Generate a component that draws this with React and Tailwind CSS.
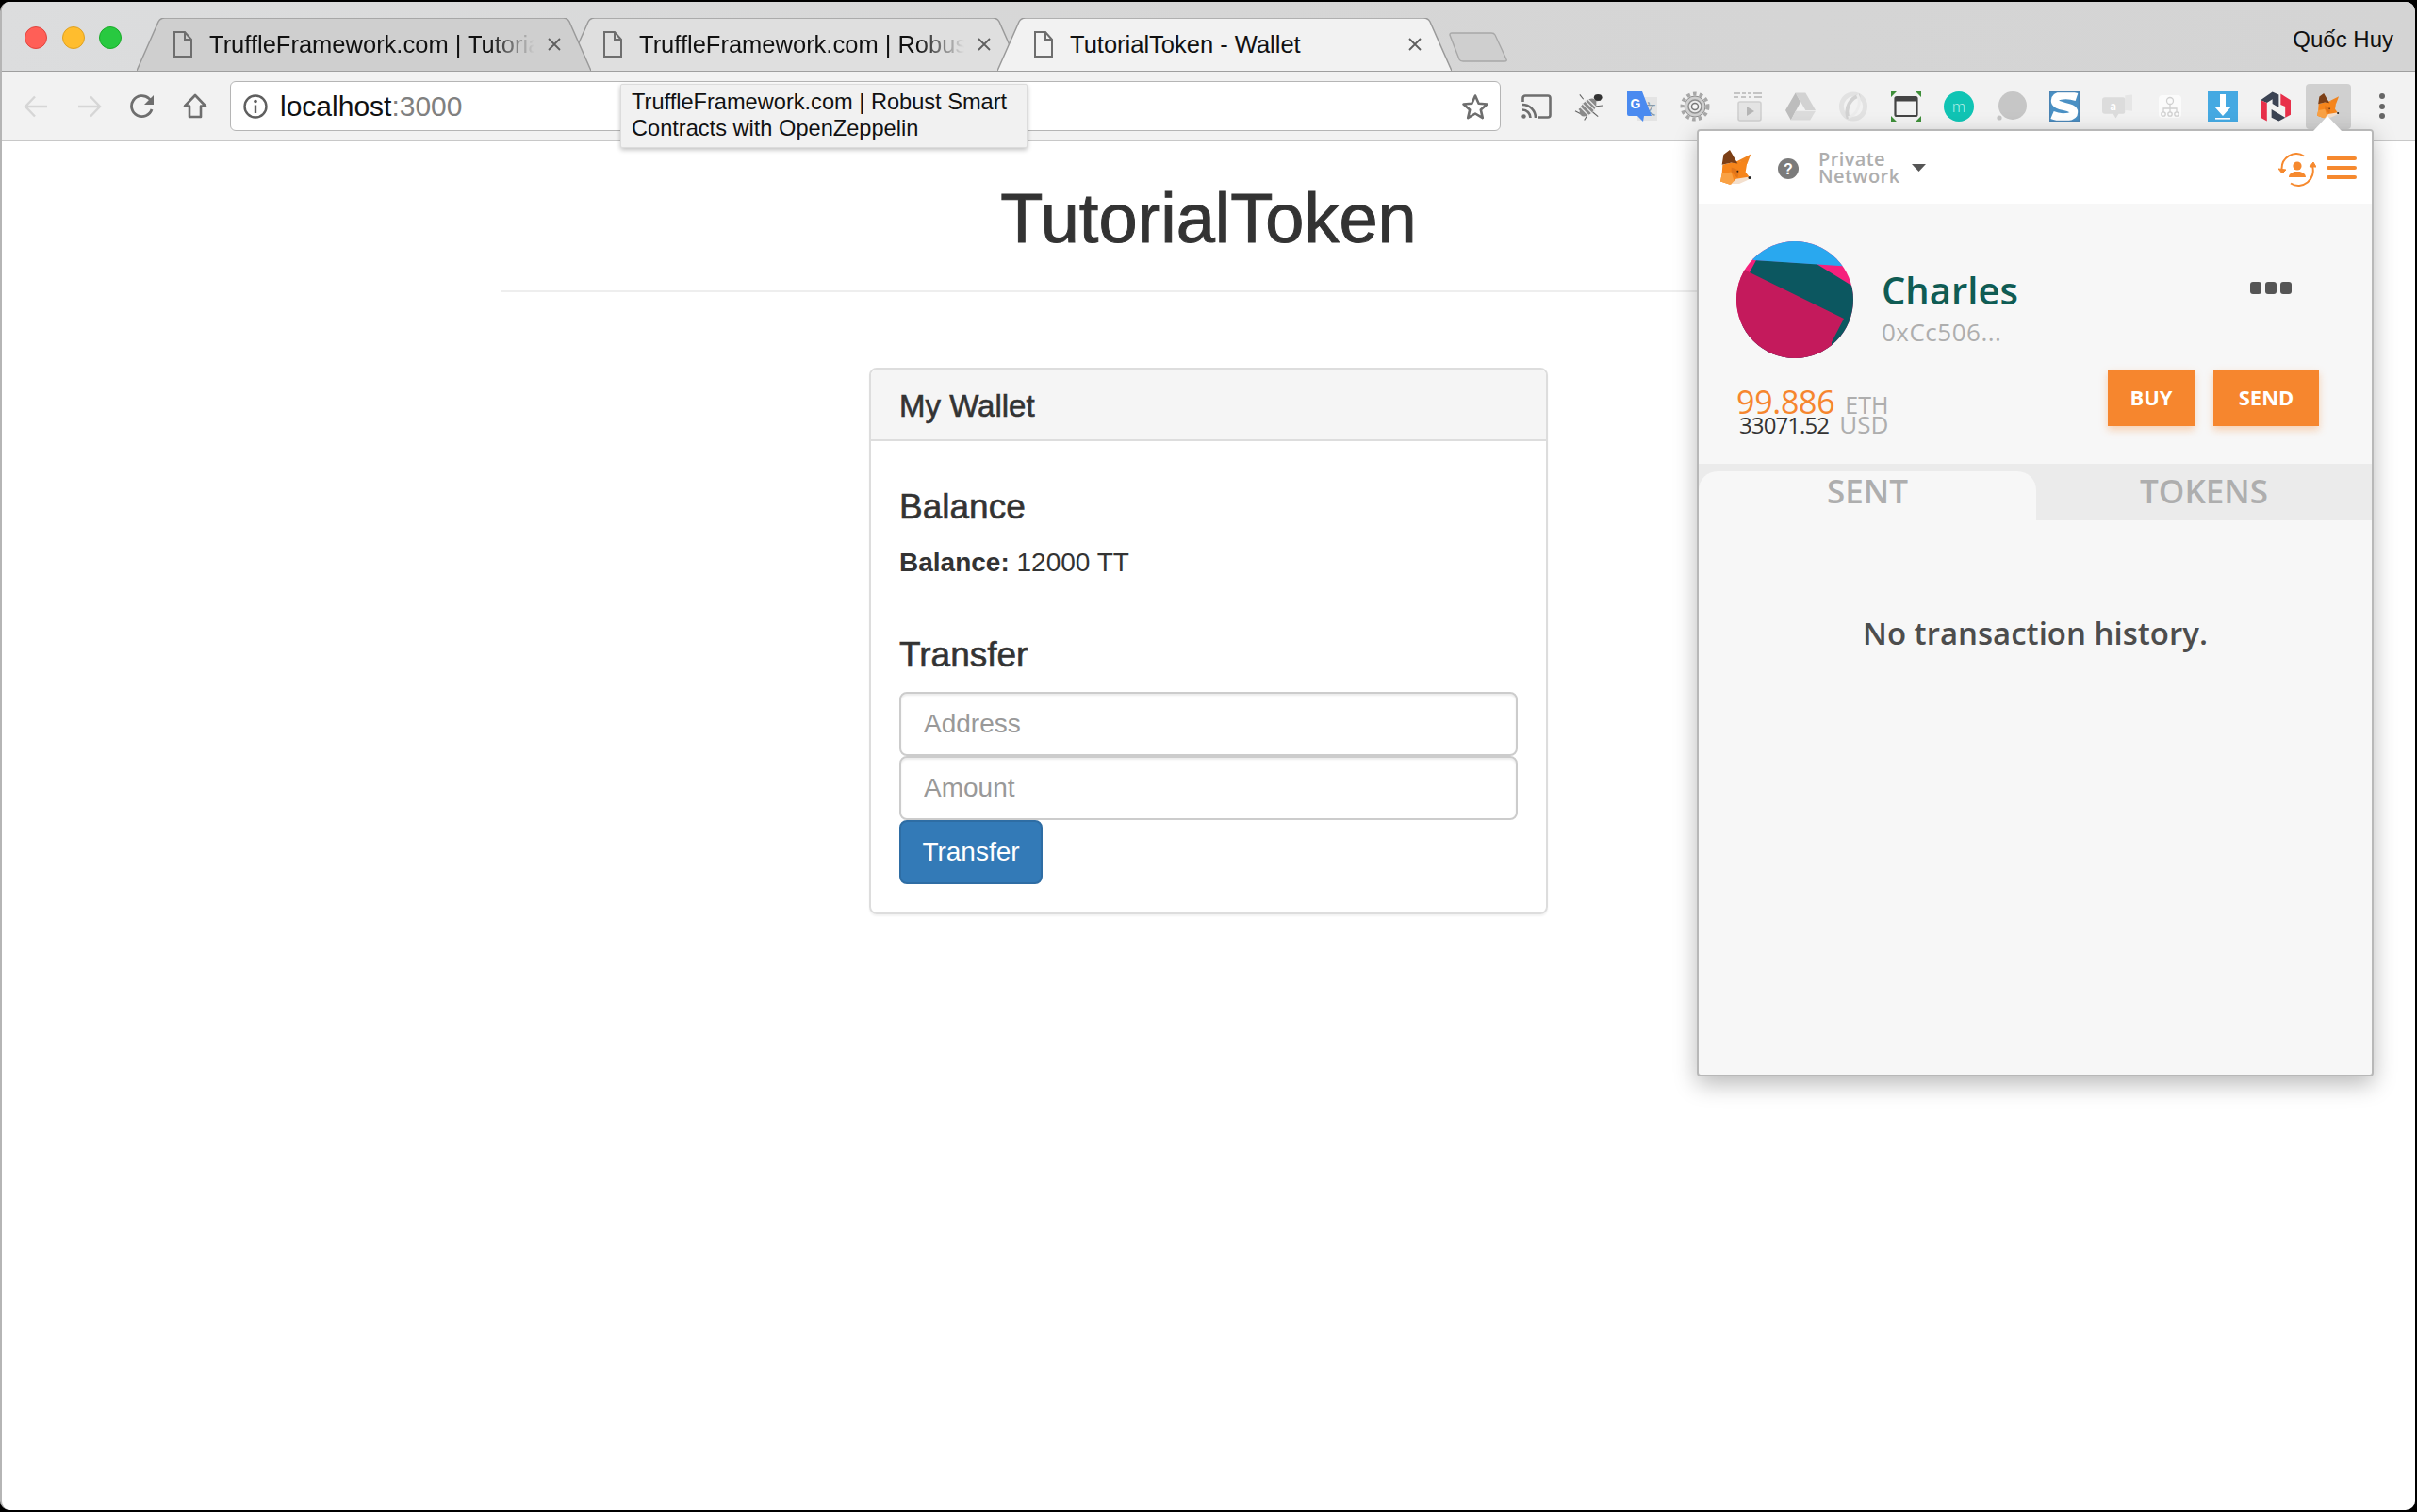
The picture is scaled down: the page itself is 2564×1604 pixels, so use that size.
import React from 'react';

const MONT = "font-['Open_Sans',sans-serif]";

function DocIcon() {
  return (
    <svg width="20" height="28" viewBox="0 0 20 28" fill="none" stroke="#6e6e6e" strokeWidth="2" className="shrink-0">
      <path d="M1 1h11l7 8v18H1z" />
      <path d="M12 1v8h7" />
    </svg>
  );
}

function CloseIcon() {
  return (
    <svg width="14" height="14" viewBox="0 0 14 14" stroke="#5f5f5f" strokeWidth="1.8" className="shrink-0">
      <path d="M1 1l12 12M13 1L1 13" />
    </svg>
  );
}

function Tab({ title, fill, stroke, fade, className }) {
  return (
    <div className={`relative flex h-[56px] w-[482px] shrink-0 items-center ${className}`}>
      <svg className="absolute inset-0" width="482" height="56" viewBox="0 0 482 56">
        <path d="M0 56 L23 4 Q25 0 30 0 L452 0 Q457 0 459 4 L482 56" fill={fill} stroke={stroke} strokeWidth="1.5" />
      </svg>
      <div className="relative ml-[39px] flex items-center">
        <DocIcon />
        <div className={`ml-[18px] w-[345px] overflow-hidden whitespace-nowrap text-[25.5px] leading-[28px] text-[#111] ${fade ? '[mask-image:linear-gradient(to_right,black_86%,transparent_100%)]' : ''}`}>
          {title}
        </div>
        <div className="ml-[14px]"><CloseIcon /></div>
      </div>
    </div>
  );
}

function Fox({ size = 35 }) {
  return (
    <svg width={size} height={size * 1.05} viewBox="0 0 105 110">
      <polygon points="55,35 97,13 85,45" fill="#f0841f" />
      <polygon points="7,47 35,40 55,35 85,40 80,70 95,90 45,105 30,110 0,100 5,75" fill="#f6851b" />
      <polygon points="5,75 35,70 45,105 30,110 0,100" fill="#f9a144" />
      <polygon points="35,55 60,65 55,90 35,70" fill="#e2761b" />
      <polygon points="10,15 30,0 55,43 35,40 5,47" fill="#7c3f16" />
      <polygon points="50,92 93,85 95,92 60,108 35,108" fill="#f3dfcd" />
      <circle cx="93" cy="88" r="4.5" fill="#222" />
      <circle cx="55" cy="68" r="2.8" fill="#3a2410" />
    </svg>
  );
}

function CastIcon() {
  return (
    <svg width="32" height="26" viewBox="0 0 32 26" fill="none" stroke="#6e6e6e" strokeWidth="2.6">
      <path d="M1.5 8V4a2.5 2.5 0 0 1 2.5-2.5h24A2.5 2.5 0 0 1 30.5 4v18a2.5 2.5 0 0 1-2.5 2.5h-10" />
      <path d="M1 11a14 14 0 0 1 14 14M1 16.5a8.5 8.5 0 0 1 8.5 8.5" />
      <circle cx="2.5" cy="23.5" r="2.2" fill="#6e6e6e" stroke="none" />
    </svg>
  );
}

function BugIcon() {
  return (
    <svg width="33" height="32" viewBox="0 0 33 32" fill="none">
      <g stroke="#666" strokeWidth="1.2">
        <path d="M10 8L6 3M20 10L29 9M22 16L31 15M20 22L26 27M12 20L5 19M9 25L1 21M14 26L11 31" />
      </g>
      <ellipse cx="15" cy="17" rx="7" ry="11.5" transform="rotate(42 15 17)" fill="#8a8a8a" />
      <path d="M8 12L20 24M6 16L16 26M11 9L23 21M15 8L24 17" stroke="#e8e8e8" strokeWidth="1.3" />
      <ellipse cx="26" cy="6" rx="4.5" ry="3.5" fill="#333" />
    </svg>
  );
}

function TranslateIcon() {
  return (
    <svg width="32" height="32" viewBox="0 0 32 32">
      <rect x="11" y="6" width="21" height="25" fill="#e4e4e4" />
      <text x="23" y="24" textAnchor="middle" fontSize="15" fill="#8a9aa8" fontFamily="Noto Sans CJK SC, sans-serif">文</text>
      <path d="M0 0h16l10 26H18l-1 6-6-6H2a2 2 0 0 1-2-2z" fill="#4a8af0" />
      <text x="9" y="18" textAnchor="middle" fontSize="14" fontWeight="700" fill="#fff" fontFamily="Liberation Sans, sans-serif">G</text>
    </svg>
  );
}

function GearIcon() {
  return (
    <svg width="32" height="32" viewBox="0 0 32 32" fill="none">
      <circle cx="16" cy="16" r="13.5" stroke="#a8a8a8" strokeWidth="4" strokeDasharray="3.6 3.2" />
      <circle cx="16" cy="16" r="11" fill="#cfcfcf" stroke="#8f8f8f" />
      <circle cx="16" cy="16" r="7" fill="#ececec" stroke="#8f8f8f" strokeWidth="1.5" />
      <circle cx="16" cy="16" r="3.5" fill="#f6f6f6" stroke="#777" strokeWidth="1.5" />
    </svg>
  );
}

function VideoIcon() {
  return (
    <svg width="32" height="32" viewBox="0 0 32 32" fill="none">
      <path d="M1 2h7M10 2h4M16 2h4M22 2h9M1 6h5M9 6h5M17 6h3M23 6h8" stroke="#c4c4c4" strokeWidth="2.2" />
      <rect x="6" y="11" width="24" height="20" rx="2" fill="#e4e4e4" stroke="#d0d0d0" strokeWidth="1.6" />
      <path d="M15 16l8 5-8 5z" fill="#b5b5b5" />
    </svg>
  );
}

function DriveIcon() {
  return (
    <svg width="33" height="30" viewBox="0 0 33 30">
      <path d="M11 0h11l11 19H22z" fill="#d2d2d2" />
      <path d="M11 0l5.5 10L6 30 0 19z" fill="#bdbdbd" />
      <path d="M11 20h22l-6 10H6z" fill="#dcdcdc" />
    </svg>
  );
}

function SwirlIcon() {
  return (
    <svg width="33" height="32" viewBox="0 0 33 32" fill="none">
      <ellipse cx="16.5" cy="16" rx="13" ry="13.5" stroke="#e2e2e2" strokeWidth="5" />
      <path d="M11 29C7 18 13 6 24 4" stroke="#d2d2d2" strokeWidth="4" />
      <path d="M21 3c5 9 0 22-10 25" stroke="#ececec" strokeWidth="3" />
    </svg>
  );
}

function FrameIcon() {
  return (
    <svg width="32" height="32" viewBox="0 0 32 32">
      <path d="M0 0h6L0 6zM32 0v6l-6-6zM0 32v-6l6 6zM32 32h-6l6-6z" fill="#3f8f3a" />
      <rect x="4.5" y="6" width="23" height="20" rx="1.5" fill="none" stroke="#444" strokeWidth="2.2" />
      <rect x="4.5" y="6" width="23" height="4.5" fill="#444" />
    </svg>
  );
}

function MintIcon() {
  return (
    <svg width="32" height="32" viewBox="0 0 32 32">
      <circle cx="16" cy="16" r="16" fill="#10c4b4" />
      <text x="16" y="22" textAnchor="middle" fontSize="18" fill="#bff0ea" fontFamily="Lato, sans-serif" fontWeight="300">m</text>
    </svg>
  );
}

function GreyDotIcon() {
  return (
    <svg width="32" height="32" viewBox="0 0 32 32">
      <circle cx="17" cy="15" r="15" fill="#c6c6c6" />
      <circle cx="3" cy="28" r="2.6" fill="#c6c6c6" />
    </svg>
  );
}

function SIcon() {
  return (
    <svg width="32" height="32" viewBox="0 0 32 32" fill="none">
      <rect width="32" height="32" fill="#4a90c4" />
      <path d="M29 6C20 3 6 3 6 10c0 7 20 5 20 12 0 6-14 7-23 3" stroke="#fff" strokeWidth="8.5" />
      <rect x="0.6" y="0.6" width="30.8" height="30.8" stroke="#4a84b4" strokeWidth="1.2" />
    </svg>
  );
}

function BubbleIcon() {
  return (
    <svg width="33" height="28" viewBox="0 0 33 28">
      <path d="M25 2l8-1v18l-8-1z" fill="#e6e6e6" />
      <path d="M3 4h20a2 2 0 0 1 2 2v14a2 2 0 0 1-2 2h-5l-3 5-3-5H3a3 3 0 0 1-3-3V7a3 3 0 0 1 3-3z" fill="#dcdcdc" />
      <text x="12" y="18" textAnchor="middle" fontSize="13" fill="#fff" fontFamily="Lato, sans-serif" fontWeight="700">a</text>
    </svg>
  );
}

function OrgIcon() {
  return (
    <svg width="24" height="24" viewBox="0 0 24 24" fill="none" stroke="#d0d0d0" strokeWidth="1.3">
      <rect width="24" height="24" rx="4" fill="#fbfbfb" stroke="none" />
      <circle cx="12" cy="6" r="3.5" />
      <path d="M12 9.5V14M5 18v-4h14v4M12 14v4" />
      <circle cx="5" cy="20" r="2.2" /><circle cx="12" cy="20" r="2.2" /><circle cx="19" cy="20" r="2.2" />
    </svg>
  );
}

function DownloadIcon() {
  return (
    <svg width="32" height="32" viewBox="0 0 32 32">
      <rect width="32" height="32" fill="#45a9e2" />
      <path d="M13 3h6v13h6L16 26 7 16h6z" fill="#fff" />
      <rect x="8" y="28" width="16" height="1.6" fill="#fff" />
    </svg>
  );
}

function NIcon() {
  return (
    <svg width="32" height="32" viewBox="0 0 33 32">
      <polygon points="0,9 13,0 20,3 20,17 13,13 13,8 7,12" fill="#3c4454" />
      <polygon points="0,9 7,12 7,32 0,28" fill="#e8304a" />
      <polygon points="12,19 27,28 33,25 20,32 12,28" fill="#3c4454" />
      <polygon points="22,2 33,9 33,25 27,28 27,16 22,14" fill="#e8304a" />
    </svg>
  );
}

function SyncIcon() {
  return (
    <svg width="40" height="36" viewBox="0 0 40 36" fill="none" stroke="#f6892e" strokeWidth="2">
      <path d="M3.5 18A15.5 16 0 0 1 27 3.5" />
      <path d="M36 14A15.5 16 0 0 1 13 32.5" />
      <path d="M0 17l4 5 4-4z" fill="#f6892e" strokeWidth="1" />
      <path d="M33 15l4-5 3 5z" fill="#f6892e" strokeWidth="1" />
      <circle cx="20" cy="14" r="4.6" fill="#f6892e" stroke="none" />
      <path d="M11 26c0-4 4-5 6-6h6c2 1 6 2 6 6z" fill="#f6892e" stroke="none" />
    </svg>
  );
}

function Avatar() {
  return (
    <svg width="124" height="124" viewBox="0 0 124 124" className="shrink-0 rounded-full">
      <rect width="124" height="124" fill="#f5207c" />
      <polygon points="21,20 85,24 124,48 124,124 0,124 14,33" fill="#0c5760" />
      <polygon points="14,33 114,82 101,107 101,124 0,124 0,24" fill="#c41a5c" />
      <polygon points="0,0 124,0 124,27 18,20" fill="#29a8ef" />
    </svg>
  );
}

const toolbarIcons = [CastIcon, BugIcon, TranslateIcon, GearIcon, VideoIcon, DriveIcon, SwirlIcon, FrameIcon, MintIcon, GreyDotIcon, SIcon, BubbleIcon, OrgIcon, DownloadIcon, NIcon];

export default function App() {
  return (
    <div className="h-[1604px] w-[2564px] overflow-hidden bg-black py-[2px] pr-[2px] font-['Liberation_Sans',sans-serif]">
      <div className="flex h-full flex-col overflow-hidden rounded-[10px] border-l-2 border-[#b5b5b5] bg-white">
        {/* tab strip */}
        <div className="flex h-[73px] shrink-0 items-end bg-gradient-to-r from-[#dcddde] via-[#d6d6d6] to-[#d4d4d4]">
          <div className="mb-[23px] ml-[24px] flex gap-[15.5px] self-end">
            <span className="h-[24px] w-[24px] rounded-full border border-[#e0443e] bg-[#ff5f57]" />
            <span className="h-[24px] w-[24px] rounded-full border border-[#dea123] bg-[#ffbd2e]" />
            <span className="h-[24px] w-[24px] rounded-full border border-[#1aab29] bg-[#28c940]" />
          </div>
          <Tab title="TruffleFramework.com | Tutorial Project" fill="#cfcfcf" stroke="#9a9a9a" fade className="z-10 ml-[16px]" />
          <Tab title="TruffleFramework.com | Robust Smart" fill="#dfdfdf" stroke="#9a9a9a" fade className="z-0 -ml-[26px]" />
          <Tab title="TutorialToken - Wallet" fill="#f2f2f2" stroke="#9a9a9a" className="z-20 -ml-[25px]" />
          <svg width="64" height="32" viewBox="0 0 64 32" className="z-0 mb-[9px] -ml-[4px] shrink-0">
            <path d="M2 3Q2 1 4 1H46Q49 1 50 3L62 29Q63 31 60 31H16Q13 31 12 29Z" fill="#cfcfcf" stroke="#a8a8a8" strokeWidth="1.4" />
          </svg>
          <div className="mb-[19px] ml-auto mr-[23px] self-end whitespace-nowrap text-[24px] leading-[28px] text-[#111]">Quốc Huy</div>
        </div>

        {/* toolbar */}
        <div className="relative z-30 flex h-[75px] shrink-0 items-center border-y border-t-[#9f9f9f] border-b-[#c8c8c8] bg-[#f2f2f2] pl-[23px]">
          <svg width="26" height="24" viewBox="0 0 26 24" fill="none" stroke="#d6d6d6" strokeWidth="2.4"><path d="M25 12H2M12 1.5L2 12l10 10.5" /></svg>
          <svg width="26" height="24" viewBox="0 0 26 24" fill="none" stroke="#d6d6d6" strokeWidth="2.4" className="ml-[31px]"><path d="M1 12h23M14 1.5L24 12 14 22.5" /></svg>
          <svg width="26" height="26" viewBox="0 0 26 26" fill="none" stroke="#6e6e6e" strokeWidth="2.8" className="ml-[30px]"><path d="M23 16a11 11 0 1 1-3-11.5L24 8" /><path d="M25 1v10H15z" fill="#6e6e6e" stroke="none" /></svg>
          <svg width="26" height="27" viewBox="0 0 26 27" fill="none" stroke="#6e6e6e" strokeWidth="2.6" className="ml-[30px]"><path d="M13 2L2 13.5h5V25h12V13.5h5z" strokeLinejoin="round" /></svg>
          <div className="ml-[24px] flex h-[53px] w-[1348px] shrink-0 items-center rounded-[6px] border border-[#b5b5b5] bg-white pl-[13px] pr-[11px]">
            <svg width="26" height="26" viewBox="0 0 26 26" fill="none" stroke="#5f5f5f" strokeWidth="2.4" className="shrink-0">
              <circle cx="13" cy="13" r="11.5" /><path d="M13 11.5V20" /><circle cx="13" cy="7.5" r="1.8" fill="#5f5f5f" stroke="none" />
            </svg>
            <span className="ml-[13px] text-[30px] leading-[36px] text-[#111]">localhost<span className="text-[#808080]">:3000</span></span>
            <svg width="30" height="28" viewBox="0 0 30 28" fill="none" stroke="#6e6e6e" strokeWidth="2.6" className="ml-auto shrink-0"><path d="M15 2.5l3.6 8.2 8.9.8-6.7 5.9 2 8.7L15 21.5l-7.8 4.6 2-8.7-6.7-5.9 8.9-.8z" strokeLinejoin="round" /></svg>
          </div>
          <div className="ml-[22px] flex items-center gap-[24px]">
            {toolbarIcons.map((Icon, i) => (
              <div key={i} className="flex h-[32px] w-[32px] items-center justify-center"><Icon /></div>
            ))}
          </div>
          <div className="ml-[16px] flex h-[48px] w-[48px] items-center justify-center rounded-[4px] bg-[#d0d0d0]"><Fox size={25} /></div>
          <div className="ml-[30px] flex flex-col gap-[4.5px]">
            <span className="h-[6px] w-[6px] rounded-full bg-[#666]" />
            <span className="h-[6px] w-[6px] rounded-full bg-[#666]" />
            <span className="h-[6px] w-[6px] rounded-full bg-[#666]" />
          </div>

          {/* bookmark tooltip */}
          <div className="absolute left-[656px] top-[13px] h-[68px] w-[432px] rounded-[2px] border border-[#dcdcdc] bg-[#f1f1f1] pl-[11px] pt-[4px] text-[23.6px] leading-[28px] text-[#111] shadow-[0_2px_5px_rgba(0,0,0,0.25)]">
            <div className="whitespace-nowrap">TruffleFramework.com | Robust Smart</div>
            <div className="whitespace-nowrap">Contracts with OpenZeppelin</div>
          </div>
        </div>

        {/* page */}
        <div className="relative flex-1">
          <div className="mx-auto w-[1502px]">
            <h1 className="border-b-2 border-[#eee] pb-[37px] pt-[42px] text-center text-[74px] font-medium leading-[79px] text-[#333] [-webkit-text-stroke:1px_#333]">TutorialToken</h1>
            <div className="mx-auto mt-[80px] w-[720px] rounded-[8px] border-2 border-[#ddd] shadow-[0_2px_2px_rgba(0,0,0,0.05)]">
              <div className="flex h-[76px] items-center rounded-t-[6px] border-b-2 border-[#ddd] bg-[#f5f5f5] px-[30px] pt-[4px] text-[33px] font-medium leading-[36px] text-[#333] [-webkit-text-stroke:0.6px_#333]">My Wallet</div>
              <div className="px-[30px] pb-[30px] pt-[50px] text-[#333]">
                <h3 className="text-[37px] font-medium leading-[40px] [-webkit-text-stroke:0.6px_#333]">Balance</h3>
                <p className="mt-[19px] text-[28px] leading-[40px]"><strong className="font-bold">Balance:</strong> 12000 TT</p>
                <h3 className="mt-[58px] text-[37px] font-medium leading-[40px] [-webkit-text-stroke:0.6px_#333]">Transfer</h3>
                <input placeholder="Address" className="mt-[19px] block h-[68px] w-full rounded-[8px] border-2 border-[#ccc] bg-white px-[24px] text-[28px] shadow-[inset_0_2px_2px_rgba(0,0,0,0.075)] placeholder:text-[#999]" />
                <input placeholder="Amount" className="block h-[68px] w-full rounded-[8px] border-2 border-[#ccc] bg-white px-[24px] text-[28px] shadow-[inset_0_2px_2px_rgba(0,0,0,0.075)] placeholder:text-[#999]" />
                <button className="block h-[68px] w-[152px] rounded-[8px] border-2 border-[#2e6da4] bg-[#337ab7] text-[28px] text-white">Transfer</button>
              </div>
            </div>
          </div>

          {/* metamask popup */}
          <div className={`absolute right-[44px] top-[-13px] z-40 flex h-[1005px] w-[718px] flex-col rounded-[4px] border-2 border-[#b8b8b8] bg-[#f7f7f7] shadow-[0_8px_24px_rgba(0,0,0,0.28)] ${MONT}`}>
            <svg width="30" height="16" viewBox="0 0 30 16" className="absolute -top-[16px] left-[652px]"><path d="M0 16L15 0l15 16z" fill="#fff" /></svg>
            <div className="flex h-[77px] shrink-0 items-center rounded-t-[2px] bg-white pl-[23px] pr-[16px]">
              <Fox size={35} />
              <svg width="22" height="22" viewBox="0 0 22 22" className="ml-[26px] mt-[2px] shrink-0"><circle cx="11" cy="11" r="11" fill="#7b7b7b" /><text x="11" y="17" textAnchor="middle" fontSize="16" fontWeight="700" fill="#fff" fontFamily="Liberation Sans, sans-serif">?</text></svg>
              <div className="ml-[21px] w-[86px] text-[20px] font-semibold leading-[18px] tracking-[0.4px] text-[#aeaeae]">
                <div>Private</div>
                <div>Network</div>
              </div>
              <svg width="15" height="8" viewBox="0 0 15 8" className="ml-[13px] shrink-0"><path d="M0 0h15L7.5 8z" fill="#555" /></svg>
              <div className="ml-auto mt-[4px]"><SyncIcon /></div>
              <div className="ml-[11px] flex w-[32px] flex-col gap-[6px]">
                <span className="h-[4px] rounded-full bg-[#f6892e]" />
                <span className="h-[4px] rounded-full bg-[#f6892e]" />
                <span className="h-[4px] rounded-full bg-[#f6892e]" />
              </div>
            </div>

            <div className="flex items-start pl-[40px] pr-[85px] pt-[40px]">
              <Avatar />
              <div className="ml-[30px] pt-[32px]">
                <div className="text-[40px] font-semibold leading-[40px] text-[#0f5c54]">Charles</div>
                <div className="mt-[8px] text-[26px] leading-[32px] tracking-[0.5px] text-[#aeaeae]">0xCc506...</div>
              </div>
              <div className="ml-auto mt-[43px] flex gap-[4px]">
                <span className="h-[13px] w-[12px] rounded-[3px] bg-[#555]" />
                <span className="h-[13px] w-[12px] rounded-[3px] bg-[#555]" />
                <span className="h-[13px] w-[12px] rounded-[3px] bg-[#555]" />
              </div>
            </div>

            <div className="mt-[12px] flex h-[60px] items-start pl-[40px] pr-[56px]">
              <div className="pt-[19px]">
                <div className="flex h-[29px] items-baseline leading-[30px]">
                  <span className="text-[34px] tracking-[-0.3px] text-[#f6862e]">99.886</span>
                  <span className="ml-[11px] text-[25px] text-[#aeaeae]">ETH</span>
                </div>
                <div className="ml-[3px] flex h-[20px] items-baseline leading-[20px]">
                  <span className="text-[24px] tracking-[-0.9px] text-[#333]">33071.52</span>
                  <span className="ml-[11px] text-[26px] text-[#aeaeae]">USD</span>
                </div>
              </div>
              <button className="ml-auto h-[60px] w-[92px] bg-[#f6862e] pb-[2px] text-[22px] font-bold text-white shadow-[0_4px_8px_rgba(246,134,46,0.35)]">BUY</button>
              <button className="ml-[20px] h-[60px] w-[112px] bg-[#f6862e] pb-[2px] text-[22px] font-bold text-white shadow-[0_4px_8px_rgba(246,134,46,0.35)]">SEND</button>
            </div>

            <div className="mt-[40px] flex h-[60px] shrink-0 bg-[#ebebeb] text-[35px] font-semibold text-[#aeaeae]">
              <div className="mt-[8px] flex h-[52px] w-[358px] items-center justify-center rounded-t-[20px] bg-[#f7f7f7] pb-[10px]">SENT</div>
              <div className="flex flex-1 items-center justify-center pb-[2px]">TOKENS</div>
            </div>

            <div className="mt-[100px] text-center text-[33px] font-semibold leading-[40px] text-[#4d4d4d]">No transaction history.</div>
          </div>
        </div>
      </div>
    </div>
  );
}
